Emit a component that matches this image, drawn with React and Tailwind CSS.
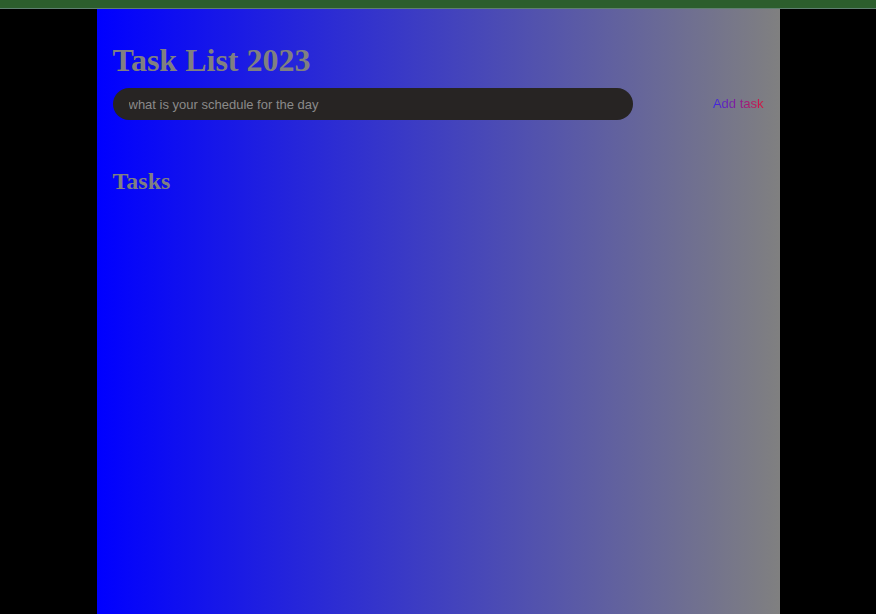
import React, { useState } from "react";

export default function App() {
  const [task, setTask] = useState("");

  return (
    <div className="min-h-[614px] bg-black flex flex-col">
      <div className="h-[9px] bg-[#2c5e2d] border-b border-[#5f8070]" />
      <div className="flex-1 w-[683px] mx-auto bg-[linear-gradient(to_right,#0000ff,#808080)] px-4 pt-[30px]">
        <h1
          className="text-[32px] font-bold text-[#808080] leading-[42px]"
          style={{ fontFamily: '"Liberation Serif", serif' }}
        >
          Task List 2023
        </h1>
        <div className="flex items-center justify-between mt-[7px]">
          <input
            type="text"
            value={task}
            onChange={(e) => setTask(e.target.value)}
            placeholder="what is your schedule for the day"
            className="w-[520px] h-[32px] rounded-full bg-[#272423] px-[16px] text-[13px] text-[#8a8a8a] placeholder:text-[#8a8a8a] outline-none"
            style={{ fontFamily: '"Liberation Sans", Arial, sans-serif' }}
          />
          <button
            className="text-[13px] bg-[linear-gradient(to_right,#3b28e6,#dc143c)] bg-clip-text text-transparent"
            style={{ fontFamily: '"Liberation Sans", Arial, sans-serif' }}
          >
            Add task
          </button>
        </div>
        <h2
          className="mt-[43px] text-[24px] font-bold text-[#808080]"
          style={{ fontFamily: '"Liberation Serif", serif' }}
        >
          Tasks
        </h2>
      </div>
    </div>
  );
}
